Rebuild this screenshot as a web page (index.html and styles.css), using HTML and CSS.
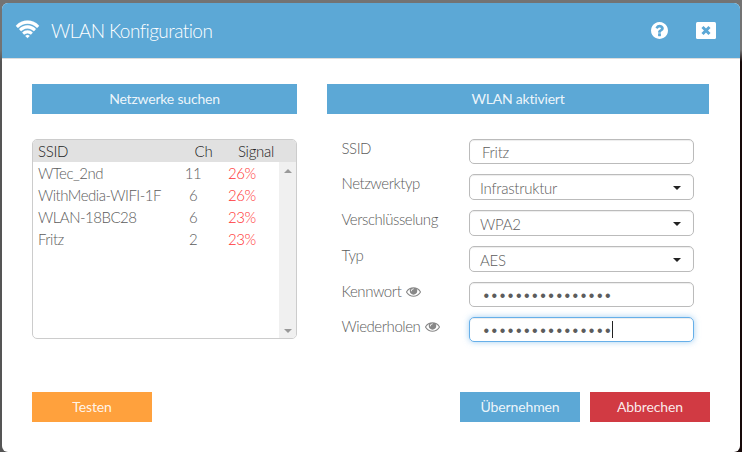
FILE: index.html
```html
<!DOCTYPE html>
<html lang="de">
<head>
<meta charset="utf-8">
<title>WLAN Konfiguration</title>
<link rel="stylesheet" href="styles.css">
</head>
<body>
<svg class="defs" width="0" height="0"><symbol id="eye" viewBox="0 384 1792 1152"><path d="M1664 960q-152-236-381-353 61 104 61 225 0 185-131.5 316.5t-316.5 131.5-316.5-131.5-131.5-316.5q0-121 61-225-229 117-381 353 133 205 333.5 326.5t434.5 121.5 434.5-121.5 333.5-326.5zm-720-384q0-20-14-34t-34-14q-125 0-214.5 89.5t-89.5 214.5q0 20 14 34t34 14 34-14 14-34q0-86 61-147t147-61q20 0 34-14t14-34zm848 384q0 34-20 69-140 230-376.5 368.5t-499.5 138.5-499.5-139-376.5-368q-20-35-20-69t20-69q140-229 376.5-368t499.5-139 499.5 139 376.5 368q20 35 20 69z"/></symbol></svg>
<main class="dialog">
  <header class="header">
    <svg class="wifi" viewBox="42 243 1964 1280" preserveAspectRatio="none"><path d="M1024 1523q-20 0-93-73.5t-73-93.5q0-32 62.500-54t103.500-22 103.500 22 62.500 54q0 20-73 93.500t-93 73.500zm270-271q-2 0-40-25t-101.500-50-128.500-25-128.500 25-101 50-40.500 25q-18 0-93.500-75t-75.500-93q0-13 10-23 78-77 196-121t233-44 233 44 196 121q10 10 10 23 0 18-75.500 93t-93.500 75zm273-272q-11 0-23-8-136-105-252-154.500t-268-49.500q-85 0-170.500 22t-149 53-113.500 62-79 53-31 22q-17 0-92-75t-75-93q0-12 10-22 132-132 320-205t380-73 380 73 320 205q10 10 10 22 0 18-75 93t-92 75zm271-271q-11 0-22-9-179-157-371.500-236.500t-420.500-79.500-420.500 79.500-371.500 236.500q-11 9-22 9-17 0-92.500-75t-75.500-93q0-13 10-23 187-186 445-288t527-102 527 102 445 288q10 10 10 23 0 18-75.500 93t-92.500 75z"/></svg>
    <h1 class="title">WLAN Konfiguration</h1>
    <svg class="help" viewBox="128 128 1536 1536"><path d="M1024 1376v-192q0-14-9-23t-23-9h-192q-14 0-23 9t-9 23v192q0 14 9 23t23 9h192q14 0 23-9t9-23zm256-672q0-88-55.500-163t-138.500-116-170-41q-243 0-371 213-15 24 8 42l132 100q7 6 19 6 16 0 25-12 53-68 86-92 34-24 86-24 48 0 85.500 26t37.500 59q0 38-20 61t-68 45q-63 28-115.500 86.500t-52.500 125.500v36q0 14 9 23t23 9h192q14 0 23-9t9-23q0-19 21.500-49.500t54.500-49.500q32-18 49-28.500t46-35 44.500-48 28-60.500 12.500-81zm384 192q0 209-103 385.500t-279.500 279.500-385.500 103-385.500-103-279.500-279.500-103-385.500 103-385.500 279.500-279.500 385.500-103 385.500 103 279.500 279.500 103 385.500z"/></svg>
    <svg class="close" viewBox="0 0 20 17"><rect width="20" height="17" rx="1.500"/><path class="cross" d="M6.500 5l7 7M13.500 5l-7 7"/></svg>
  </header>
  <div class="columns">
    <section class="networks">
      <button class="btn wide">Netzwerke suchen</button>
      <div class="table">
        <div class="row head"><span>SSID</span><span class="ch">Ch</span><span class="sig">Signal</span></div>
        <div class="body">
          <div class="rows">
            <div class="row"><span>WTec_2nd</span><span class="ch">11</span><span class="sig">26%</span></div>
            <div class="row"><span>WithMedia-WIFI-1F</span><span class="ch">6</span><span class="sig">26%</span></div>
            <div class="row"><span>WLAN-18BC28</span><span class="ch">6</span><span class="sig">23%</span></div>
            <div class="row"><span>Fritz</span><span class="ch">2</span><span class="sig">23%</span></div>
          </div>
          <div class="scroll"><i class="up"></i><i class="down"></i></div>
        </div>
      </div>
    </section>
    <section class="settings">
      <button class="btn wide">WLAN aktiviert</button>
      <div class="form">
        <div class="field"><label>SSID</label><div class="input text">Fritz</div></div>
        <div class="field"><label>Netzwerktyp</label><div class="input select">Infrastruktur<i class="caret"></i></div></div>
        <div class="field"><label>Verschlüsselung</label><div class="input select">WPA2<i class="caret"></i></div></div>
        <div class="field"><label>Typ</label><div class="input select">AES<i class="caret"></i></div></div>
        <div class="field"><label>Kennwort <svg class="eye"><use href="#eye"/></svg></label><div class="input password">••••••••••••••••</div></div>
        <div class="field"><label>Wiederholen <svg class="eye"><use href="#eye"/></svg></label><div class="input password focus">••••••••••••••••<i class="cursor"></i></div></div>
      </div>
    </section>
  </div>
  <footer class="footer">
    <button class="btn test">Testen</button>
    <button class="btn">Übernehmen</button>
    <button class="btn cancel">Abbrechen</button>
  </footer>
</main>
</body>
</html>
```
FILE: styles.css
```css
* { box-sizing: border-box; }
body {
  margin: 0;
  padding: 3px 2px 0;
  height: 452px;
  overflow: hidden;
  background: linear-gradient(#737373 0 50px, transparent 62px), linear-gradient(90deg, #555 50%, #160909 50%);
  font: 300 15px/20px Lato, sans-serif;
  letter-spacing: -.25px;
  color: #5c5c5c;
}
.defs { position: absolute; }
.dialog {
  height: 449px;
  background: #fff;
  border-radius: 6px;
  overflow: hidden;
}
.header {
  display: flex;
  align-items: center;
  height: 56px;
  padding: 0 24px 0 14px;
  background: #5ca8d6;
  border-bottom: 1px solid #ddd;
  fill: #fff;
}
.wifi { width: 23px; height: 16px; margin-bottom: 2px; stroke: #fff; stroke-width: 15; overflow: visible; }
.title {
  flex: 1;
  margin: 0 0 0 12px;
  font-size: 19px;
  font-weight: 300;
  line-height: 24px;
  letter-spacing: -.56px;
  color: #fff;
}
.help { width: 17px; height: 17px; }
.close { width: 20px; height: 17px; margin-left: 28px; }
.cross { stroke: #5ca8d6; stroke-width: 3; }
.columns {
  display: flex;
  gap: 30px;
  padding: 25px 31px 0 30px;
}
.networks { width: 265px; }
.settings { width: 382px; }
.btn {
  display: block;
  width: 120px;
  height: 30px;
  padding: 0;
  border: 0;
  background: #5ca8d6;
  color: rgba(255, 255, 255, .9);
  font: 400 14px/30px Lato, sans-serif;
  letter-spacing: -.12px;
}
.wide { width: 100%; letter-spacing: -.2px; }
.table {
  display: flex;
  flex-direction: column;
  height: 200px;
  margin-top: 25px;
  border: 1px solid #ccc;
  border-radius: 5px;
  overflow: hidden;
}
.row {
  display: grid;
  grid-template-columns: 132px 46px 1fr;
  height: 22px;
  line-height: 22px;
  letter-spacing: -.5px;
  padding-left: 5px;
}
.ch { text-align: center; }
.sig { padding-left: 12px; color: #f33; }
.head { background: #e1e1e1; color: #222; letter-spacing: -.3px; }
.head .ch { padding-left: 21px; }
.head .sig { padding-left: 22px; color: inherit; }
.body { display: flex; flex: 1; }
.rows { flex: 1; }
.scroll {
  display: flex;
  flex-direction: column;
  justify-content: space-between;
  align-items: center;
  width: 17px;
  padding: 7px 0 5px;
  background: #f0f0f0;
}
.up, .down { border: 4px solid transparent; }
.up { border-top: 0; border-bottom-color: #999; }
.down { border-bottom: 0; border-top-color: #999; }
.form {
  display: grid;
  grid-template-rows: 35px 36px 36px 36px 35px 26px;
  padding: 25px 15px 0 14px;
}
.field { display: flex; justify-content: space-between; align-items: flex-start; }
.field label { margin-top: -1px; padding-left: .5px; white-space: nowrap; letter-spacing: -.45px; }
.eye { width: 15px; height: 10px; margin-left: 1px; fill: #888; }
.input {
  display: flex;
  align-items: center;
  width: 225px;
  height: 25px;
  padding: 0 12px;
  border: 1px solid #bbb;
  border-radius: 5px;
  box-shadow: inset 0 1px 1px rgba(0, 0, 0, .075);
}
.select { height: 26px; padding: 1px 12px 0 10px; justify-content: space-between; }
.caret { border: 4px solid transparent; border-top-color: #222; border-bottom: 0; }
.password { padding: 2px 12px 0 13.5px; font: 400 16px/20px "Liberation Sans", sans-serif; letter-spacing: 2.5px; }
.focus { border-color: #66afe9; box-shadow: inset 0 1px 1px rgba(0, 0, 0, .075), 0 0 6px rgba(102, 175, 233, .6); }
.cursor { width: 1px; height: 17px; margin: -2px 0 0 -1.5px; background: #222; }
.footer { display: flex; gap: 10px; padding: 49px 30px 0; }
.test { margin-right: auto; background: #ffa13d; }
.cancel { background: #d13a43; }
```
